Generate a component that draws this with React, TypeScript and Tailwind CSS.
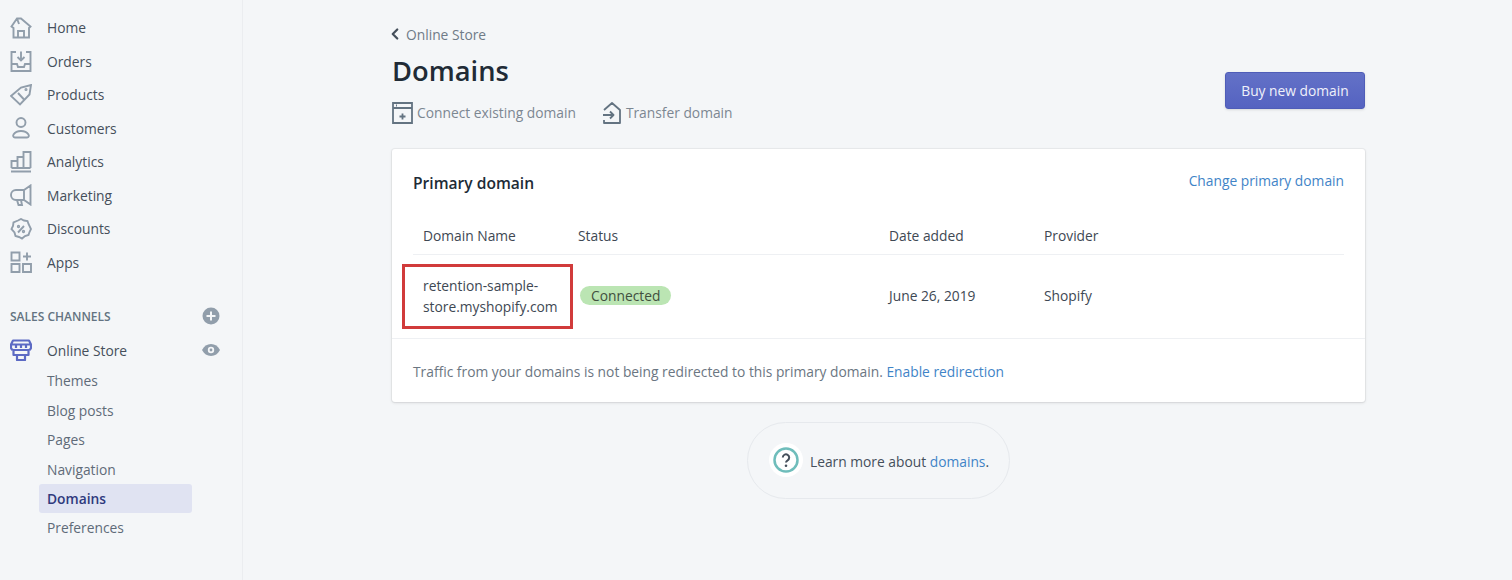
import React from 'react';
import { ChevronLeft } from 'lucide-react';

const ic = { fill: 'none', stroke: 'currentColor', strokeWidth: 1.9, strokeLinejoin: 'miter' } as const;

const HomeIcon = () => (
    <svg viewBox="0 0 22 22" className="w-[22px] h-[22px]" {...ic}>
        <path d="M1.500 9.500 7 1.500h4l9.500 8-1.500 1.500v9.500H3.500V11L1.500 9.500zM7 1.500l2 5.500M8 20.500V14h6v6.500" />
    </svg>
);
const OrdersIcon = () => (
    <svg viewBox="0 0 22 22" className="w-[22px] h-[22px]" {...ic}>
        <path d="M6 2H1.500v19h19V2H16M1.500 14H7l1 3h6l1-3h5.500M11 1.500V10M7.500 7l3.500 3.500L14.500 7" />
    </svg>
);
const ProductsIcon = () => (
    <svg viewBox="0 0 22 22" className="w-[22px] h-[22px]" {...ic}>
        <path d="M1 12 11 3.500l10-2.500-1.500 9.500-9.500 10L1 12zM8 9l6.500 7" />
        <circle cx="16" cy="5.500" r=".6" />
    </svg>
);
const CustomersIcon = () => (
    <svg viewBox="0 0 22 22" className="w-[22px] h-[22px]" {...ic}>
        <circle cx="11" cy="5.500" r="4.500" />
        <path d="M5 20.500h12c1.800 0 2.200-2 1.500-3-1.300-2-4-3.500-7.500-3.500s-6.200 1.500-7.500 3.500c-.7 1-.3 3 1.500 3z" />
    </svg>
);
const AnalyticsIcon = () => (
    <svg viewBox="0 0 22 22" className="w-[22px] h-[22px]" {...ic}>
        <path d="M1 20.500h20M1.500 17V10h6v7M7.500 17V6h6v11M13.500 17V1h7v16M1.500 17h19" />
    </svg>
);
const MarketingIcon = () => (
    <svg viewBox="0 0 22 22" className="w-[22px] h-[22px]" {...ic}>
        <path d="M20.500 1.500v19L14 16H6a4.500 4.500 0 0 1 0-10h8l6.500-4.500zM14 6v10M7 16l1.500 5H12l-1-5" />
    </svg>
);
const DiscountsIcon = () => (
    <svg viewBox="0 0 22 22" className="w-[22px] h-[22px]" {...ic}>
        <path d="M8 2.500 11 1l3 1.500 3.500.5 1 3L21 11l-1.500 3-1 3-3.500 1-3 2.500-3-1.500-3.500-1-1-3.500L1.500 11l1.500-3 .5-3.500L8 2.500z" />
        <path d="M8 14.500 14 8" />
        <circle cx="8.500" cy="8.500" r=".7" />
        <circle cx="13.500" cy="13.500" r=".7" />
    </svg>
);
const AppsIcon = () => (
    <svg viewBox="0 0 22 22" className="w-[22px] h-[22px]" {...ic}>
        <path d="M1.500 1.500h8v8h-8zM1.500 13h8v8h-8zM13 13h8v8h-8zM17 1.500v8M13 5.500h8" />
    </svg>
);
const StoreIcon = () => (
    <svg viewBox="0 0 22 22" className="w-[22px] h-[22px] text-[#5c6ac4]" fill="none" stroke="currentColor" strokeWidth={2.200} strokeLinejoin="round">
        <path d="M3 1.500h16l2 4v3.500a2.500 2.500 0 0 1-2.500 2h-15A2.500 2.500 0 0 1 1 9V5.500l2-4zM1 5.500h20M3.500 11v5h15v-5M7 16v5h8v-5M6 6v3M11 6v3M16 6v3" />
    </svg>
);

const mainNav = [
    { label: 'Home', icon: HomeIcon },
    { label: 'Orders', icon: OrdersIcon },
    { label: 'Products', icon: ProductsIcon },
    { label: 'Customers', icon: CustomersIcon },
    { label: 'Analytics', icon: AnalyticsIcon },
    { label: 'Marketing', icon: MarketingIcon },
    { label: 'Discounts', icon: DiscountsIcon },
    { label: 'Apps', icon: AppsIcon },
];

const storeNav = ['Themes', 'Blog posts', 'Pages', 'Navigation', 'Domains', 'Preferences'];

const Sidebar = () => (
    <aside className="w-[243px] shrink-0 border-r border-[#ebedf0] pt-[12px] text-[13.800px] text-[#454f5b]">
        {mainNav.map(({ label, icon: Icon }) => (
            <div key={label} className="flex items-center h-[33.500px] pl-[10px]">
                <span className="text-[#919eab] w-[37px] -mt-[2px]"><Icon /></span>
                <span>{label}</span>
            </div>
        ))}
        <div className="flex items-center justify-between h-[20px] mt-[26px] pl-[10px] pr-[22px]">
            <span className="text-[12px] font-semibold text-[#637381] pt-[1px]">SALES CHANNELS</span>
            <svg viewBox="0 0 18 18" className="w-[18px] h-[18px] text-[#919eab]">
                <circle cx="9" cy="9" r="8.500" fill="currentColor" />
                <path d="M9 4.500v9M4.500 9h9" stroke="#f4f6f8" strokeWidth="2" />
            </svg>
        </div>
        <div className="flex items-center justify-between h-[33px] mt-[9px] pl-[10px] pr-[22px]">
            <div className="flex items-center">
                <span className="w-[37px] -mt-[4px]"><StoreIcon /></span>
                <span>Online Store</span>
            </div>
            <svg viewBox="0 0 18 12" className="w-[18px] h-[12px] -mt-[4px] text-[#919eab]">
                <path d="M0 6c2-3.800 5-6 9-6s7 2.200 9 6c-2 3.800-5 6-9 6s-7-2.200-9-6z" fill="currentColor" />
                <circle cx="9" cy="6" r="3.200" fill="#f4f6f8" />
                <circle cx="9" cy="6" r="1.400" fill="currentColor" />
            </svg>
        </div>
        <div className="flex flex-col w-[153px] ml-[39px] -mt-[2px]">
            {storeNav.map(item => (
                <div
                    key={item}
                    className={`h-[29.400px] flex items-center pl-[8px] pt-[2px] rounded-[3px] ${
                        item === 'Domains' ? 'bg-[#e0e3f2] font-semibold text-[#2f3a7d]' : 'text-[#5f6b78]'
                    }`}
                >
                    {item}
                </div>
            ))}
        </div>
    </aside>
);

const PageHeader = () => (
    <div className="flex justify-between">
        <div>
            <div className="flex items-center h-[20px] mt-[25px] text-[13.800px] text-[#6f7b87]">
                <ChevronLeft className="w-[18px] h-[18px] -ml-[6px] mr-[2px] -mt-[3px] text-[#454f5b]" strokeWidth={3} />
                Online Store
            </div>
            <h1 className="text-[27.300px] leading-[36px] font-semibold text-[#212b36] mt-[8px]">Domains</h1>
            <div className="flex items-center h-[24px] mt-[12px] text-[13.800px] text-[#7c8792]">
                <svg viewBox="0 0 21 22" className="w-[21px] h-[22px] mr-[4px] text-[#637381]" fill="none" stroke="currentColor" strokeWidth="1.800">
                    <path d="M1 1h19v20H1zM1 6h19M4 3.500h1M10.500 11.500v6M7.500 14.500h6" />
                </svg>
                Connect existing domain
                <svg viewBox="0 0 20 22" className="w-[20px] h-[22px] ml-[26px] mr-[4px] text-[#637381]" fill="none" stroke="currentColor" strokeWidth="1.800" strokeLinejoin="round">
                    <path d="M2 8 10 1l8 7v13H2v-3M1 13h10M8 9.500l3.500 3.500L8 16.500" />
                </svg>
                Transfer domain
            </div>
        </div>
        <button className="self-start mt-[72px] w-[140px] h-[37px] pt-[1px] rounded-[3px] bg-gradient-to-b from-[#6371c7] to-[#5563c1] border border-[#4f5db8] text-[13.800px] text-[#f0f1fa] shadow-sm">
            Buy new domain
        </button>
    </div>
);

const rowCols = 'grid grid-cols-[155px_311px_155px_1fr] pl-[10px]';

const DomainCard = () => (
    <section className="mt-[24px] h-[253px] bg-white rounded-[3px] shadow-[0_0_0_1px_rgba(63,63,68,0.05),0_1px_3px_0_rgba(63,63,68,0.15)] flex flex-col text-[13.800px] text-[#3e4853]">
        <div className="flex justify-between px-[21px] pt-[21px]">
            <h2 className="text-[15.600px] leading-[26px] font-semibold text-[#212b36]">Primary domain</h2>
            <a className="text-[#3f84c7] leading-[22px]">Change primary domain</a>
        </div>
        <div className="mx-[21px] mt-[20px]">
            <div className={`${rowCols} h-[39px] items-center border-b border-[#eef0f3] pt-[2px]`}>
                <div>Domain Name</div>
                <div>Status</div>
                <div>Date added</div>
                <div>Provider</div>
            </div>
            <div className={`${rowCols} h-[83px] items-center`}>
                <div className="relative leading-[21px] -mt-[1px]">
                    retention-sample-<br />store.myshopify.com
                    <div className="absolute -left-[21px] -top-[11px] w-[171px] h-[65px] border-[3px] border-[#d13b3b]" />
                </div>
                <div className="flex mb-[3px]">
                    <span className="ml-[2px] h-[19px] leading-[19px] px-[11px] rounded-full bg-[#bbe5b3] text-[#414f3e]">Connected</span>
                </div>
                <div>June 26, 2019</div>
                <div>Shopify</div>
            </div>
        </div>
        <div className="border-t border-[#eef0f3] flex-1 flex items-center px-[21px] pt-[3px] text-[#6b7682]">
            <span>
                Traffic from your domains is not being redirected to this primary domain.{' '}
                <a className="text-[#3f84c7]">Enable redirection</a>
            </span>
        </div>
    </section>
);

const FooterHelp = () => (
    <div className="flex justify-center mt-[20px]">
        <div className="flex items-center h-[77px] w-[263px] pl-[21px] rounded-full border border-[#e6e9ed] text-[13.800px] text-[#454f5b]">
            <div className="w-[34px] h-[34px] rounded-full bg-white flex items-center justify-center mr-[7px] mt-[-1px]">
                <svg viewBox="0 0 26 26" className="w-[26px] h-[26px]" fill="none">
                    <circle cx="13" cy="13" r="11.500" stroke="#6fbdbb" strokeWidth="2.500" />
                    <path d="M9.800 10.500a3.200 3.200 0 1 1 4.800 2.800c-1 .6-1.600 1.100-1.600 2.200" stroke="#454f5b" strokeWidth="2" />
                    <circle cx="13" cy="18.800" r="1.300" fill="#454f5b" />
                </svg>
            </div>
            <span className="mt-[3px]">Learn more about <a className="text-[#3f84c7]">domains</a>.</span>
        </div>
    </div>
);

const App: React.FC = () => (
    <div className="flex h-[580px] w-[1512px] overflow-hidden bg-[#f4f6f8] font-['Open_Sans','Noto_Sans',sans-serif]">
        <Sidebar />
        <main className="w-[973px] ml-[149px]">
            <PageHeader />
            <DomainCard />
            <FooterHelp />
        </main>
    </div>
);

export default App;
